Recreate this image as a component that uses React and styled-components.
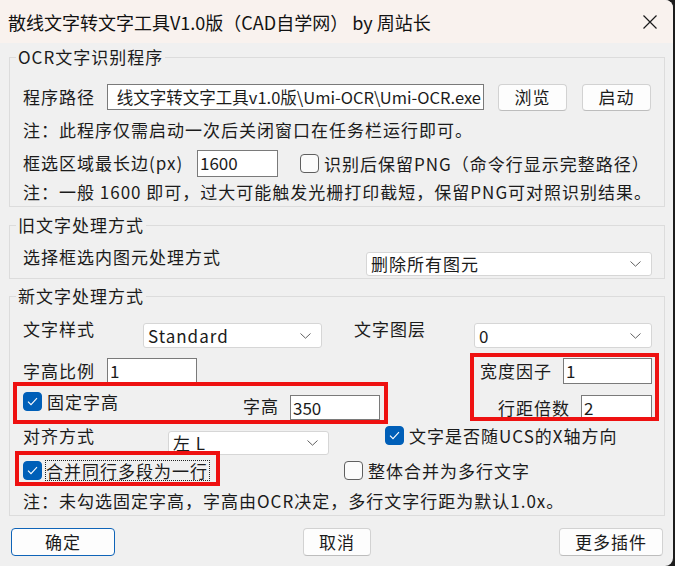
import React from 'react';
import styled, { createGlobalStyle } from 'styled-components';

const Global = createGlobalStyle`
  html, body { margin: 0; padding: 0; background: #1d1d1d; }
  body { font-family: "Noto Sans CJK SC", "Noto Sans", sans-serif; color: #1b1b1b; }
  * { box-sizing: border-box; }
`;

const Window = styled.div`
  width: 673px;
  height: 566px;
  background: #f0f0f0;
  border-radius: 0 8px 8px 0;
  overflow: hidden;
  display: flex;
  flex-direction: column;
`;

const TitleBar = styled.div`
  height: 43px;
  flex: none;
  background: #f9f2ee;
  display: flex;
  align-items: center;
  justify-content: space-between;
  padding: 0 16px 0 8px;
`;

const Title = styled.div`
  font-size: 18px;
  line-height: 24px;
  color: #111;
  white-space: nowrap;
`;

const CloseBtn = styled.div`
  width: 14px;
  height: 14px;
  display: flex;
  svg { display: block; }
`;

const Body = styled.div`
  flex: 1;
  display: flex;
  flex-direction: column;
  padding: 0 8px 0 9px;
`;

const Group = styled.fieldset`
  margin: ${p => p.$mt}px 0 0;
  padding: 0;
  border: 1px solid #dcdcdc;
  min-width: 0;
`;

const Legend = styled.legend`
  margin-left: 6px;
  padding: 0 2px;
  font-size: 17px;
  letter-spacing: 1px;
  line-height: 22px;
  white-space: nowrap;
`;

const GroupBody = styled.div`
  display: flex;
  flex-direction: column;
  padding: ${p => p.$pt}px 12px ${p => p.$pb}px 13px;
`;

const Row = styled.div`
  display: flex;
  align-items: ${p => p.$align || 'center'};
  justify-content: ${p => p.$justify || 'flex-start'};
  height: ${p => (p.$h ? `${p.$h}px` : 'auto')};
  margin-top: ${p => p.$mt || 0}px;
  flex: none;
`;

const Label = styled.span`
  flex: none;
  font-size: 17px;
  letter-spacing: 1px;
  line-height: 22px;
  white-space: nowrap;
  width: ${p => (p.$w ? `${p.$w}px` : 'auto')};
  margin-left: ${p => p.$ml || 0}px;
  margin-top: ${p => p.$mt || 0}px;
`;

const Note = styled.div`
  font-size: 17px;
  letter-spacing: 1px;
  line-height: 22px;
  white-space: nowrap;
  height: ${p => p.$h}px;
  display: flex;
  align-items: center;
  margin-top: ${p => p.$mt || 0}px;
`;

const TextBox = styled.div`
  flex: none;
  width: ${p => p.$w}px;
  height: ${p => p.$h || 25}px;
  margin-left: ${p => p.$ml || 0}px;
  margin-top: ${p => p.$mt || 0}px;
  background: #fff;
  border: 1px solid #7a7a7a;
  font-size: ${p => (p.$end ? 16.5 : 17)}px;
  line-height: 22px;
  padding: 0 2px;
  display: flex;
  align-items: center;
  justify-content: ${p => (p.$end ? 'flex-end' : 'flex-start')};
  overflow: hidden;
  white-space: nowrap;
`;

const Button = styled.button`
  flex: none;
  width: ${p => p.$w}px;
  height: ${p => p.$h || 27}px;
  margin-left: ${p => p.$ml || 0}px;
  background: #fdfdfd;
  border: 1px solid ${p => (p.$primary ? '#0f64b8' : '#d2d2d2')};
  border-bottom-color: ${p => (p.$primary ? '#0f64b8' : '#bdbdbd')};
  border-radius: 4px;
  font-family: inherit;
  font-size: 17px;
  letter-spacing: 1px;
  line-height: 22px;
  color: #1b1b1b;
  padding: 0;
  display: flex;
  align-items: center;
  justify-content: center;
`;

const Select = styled.div`
  flex: none;
  width: ${p => p.$w}px;
  height: ${p => p.$h || 25}px;
  margin-left: ${p => p.$ml || 0}px;
  margin-top: ${p => p.$mt || 0}px;
  background: #fff;
  border: 1px solid #d6d6d6;
  border-radius: 3px;
  display: flex;
  align-items: center;
  justify-content: space-between;
  padding: 0 10px 0 4px;
  font-size: 17px;
  letter-spacing: 1px;
  line-height: 22px;
  white-space: nowrap;
`;

const CheckItem = styled.label`
  flex: none;
  display: flex;
  align-items: center;
  gap: ${p => (p.$focus ? 3 : 4)}px;
  margin-left: ${p => p.$ml || 0}px;
  margin-top: ${p => p.$mt || 0}px;
  font-size: 17px;
  letter-spacing: 1px;
  line-height: 22px;
  white-space: nowrap;
`;

const Box = styled.span`
  flex: none;
  width: 19px;
  height: 19px;
  border-radius: 4px;
  background: ${p => (p.$on ? '#005fb8' : '#fbfbfb')};
  border: 1px solid ${p => (p.$on ? '#005fb8' : '#5f5f5f')};
  display: flex;
  align-items: center;
  justify-content: center;
`;

const CheckText = styled.span`
  border: 1px ${p => (p.$focus ? 'dotted #222' : 'solid transparent')};
  padding: 0 1px 0 0;
  line-height: 19px;
`;

const Highlight = styled.div`
  position: relative;
  flex: none;
  margin-top: ${p => p.$mt || 0}px;
  &::after {
    content: '';
    position: absolute;
    top: ${p => -p.$t}px;
    right: ${p => -p.$r}px;
    bottom: ${p => -p.$b}px;
    left: ${p => -p.$l}px;
    border: 4px solid #ee1111;
    pointer-events: none;
  }
`;

const Column = styled.div`
  display: flex;
  flex-direction: column;
  align-items: ${p => p.$items || 'flex-start'};
  margin-top: ${p => p.$mt || 0}px;
`;

const Split = styled.div`
  display: flex;
  justify-content: space-between;
  align-items: flex-start;
`;

const ButtonBar = styled.div`
  display: flex;
  justify-content: space-between;
  padding: 0 2px;
  margin-top: 12px;
`;

const Chevron = () => (
  <svg width="11" height="6" viewBox="0 0 11 6">
    <path d="M0.5 0.5 L5.5 5.2 L10.5 0.5" fill="none" stroke="#606060" strokeWidth="1" />
  </svg>
);

const Check = ({ on, children, focus, ml, mt }) => (
  <CheckItem $ml={ml} $mt={mt} $focus={focus}>
    <Box $on={on}>
      {on && (
        <svg width="11" height="9" viewBox="0 0 11 9">
          <path d="M1 4.6 L4 7.6 L10 1.2" fill="none" stroke="#fff" strokeWidth="1.1" />
        </svg>
      )}
    </Box>
    <CheckText $focus={focus}>{children}</CheckText>
  </CheckItem>
);

export default function App() {
  return (
    <>
      <Global />
      <Window>
        <TitleBar>
          <Title>散线文字转文字工具V1.0版（CAD自学网） by 周站长</Title>
          <CloseBtn>
            <svg width="14" height="14" viewBox="0 0 14 14">
              <path d="M0.5 0.5 L13.5 13.5 M13.5 0.5 L0.5 13.5" stroke="#1a1a1a" strokeWidth="1.2" />
            </svg>
          </CloseBtn>
        </TitleBar>
        <Body>
          <Group $mt={3}>
            <Legend>OCR文字识别程序</Legend>
            <GroupBody $pt={14} $pb={0}>
              <Row $h={30}>
                <Label $w={84}>程序路径</Label>
                <TextBox $w={377} $h={26} $end>线文字转文字工具v1.0版\Umi-OCR\Umi-OCR.exe</TextBox>
                <Button $w={69} $ml={14}>浏览</Button>
                <Button $w={69} $ml={15}>启动</Button>
              </Row>
              <Note $h={36}>注：此程序仅需启动一次后关闭窗口在任务栏运行即可。</Note>
              <Row $h={30}>
                <Label $w={174}>框选区域最长边(px)</Label>
                <TextBox $w={81} $h={27}>1600</TextBox>
                <Check ml={22}>识别后保留PNG（命令行显示完整路径）</Check>
              </Row>
              <Note $h={28}>注：一般 1600 即可，过大可能触发光栅打印截短，保留PNG可对照识别结果。</Note>
            </GroupBody>
          </Group>

          <Group $mt={7}>
            <Legend>旧文字处理方式</Legend>
            <GroupBody $pt={0} $pb={2}>
              <Row $align="flex-start" $justify="space-between">
                <Label $mt={10}>选择框选内图元处理方式</Label>
                <Select $w={286} $h={24} $mt={16}>
                  <span>删除所有图元</span>
                  <Chevron />
                </Select>
              </Row>
            </GroupBody>
          </Group>

          <Group $mt={6}>
            <Legend>新文字处理方式</Legend>
            <GroupBody $pt={11} $pb={3}>
              <Row $h={30} $align="flex-start">
                <Label $w={120}>文字样式</Label>
                <Select $w={179} $mt={5}>
                  <span>Standard</span>
                  <Chevron />
                </Select>
                <Label $w={120} $ml={32}>文字图层</Label>
                <Select $w={178} $mt={5}>
                  <span>0</span>
                  <Chevron />
                </Select>
              </Row>

              <Split>
                <Column $mt={10}>
                  <Row $h={25}>
                    <Label $w={84}>字高比例</Label>
                    <TextBox $w={90}>1</TextBox>
                  </Row>
                  <Highlight $mt={8} $t={9} $r={8} $b={4} $l={10}>
                    <Row $h={29} $align="flex-start">
                      <Check on>固定字高</Check>
                      <Label $ml={122} $mt={4}>字高</Label>
                      <TextBox $w={90} $ml={11} $mt={4}>350</TextBox>
                    </Row>
                  </Highlight>
                </Column>
                <Highlight $mt={10} $t={5} $r={7} $b={1} $l={10}>
                  <Column $items="flex-end">
                    <Row $h={26}>
                      <Label>宽度因子</Label>
                      <TextBox $w={89} $h={26} $ml={11}>1</TextBox>
                    </Row>
                    <Row $h={25} $mt={11}>
                      <Label>行距倍数</Label>
                      <TextBox $w={71} $ml={11}>2</TextBox>
                    </Row>
                  </Column>
                </Highlight>
              </Split>

              <Row $h={30} $mt={5} $align="flex-start">
                <Label $w={145}>对齐方式</Label>
                <Select $w={161} $h={24} $mt={6}>
                  <span>左 L</span>
                  <Chevron />
                </Select>
                <Check on ml={56}>文字是否随UCS的X轴方向</Check>
              </Row>

              <Row $h={22} $mt={4}>
                <Highlight $t={9} $r={10} $b={5} $l={8}>
                  <Check on focus>合并同行多段为一行</Check>
                </Highlight>
                <Check ml={134}>整体合并为多行文字</Check>
              </Row>

              <Note $h={22} $mt={9}>注：未勾选固定字高，字高由OCR决定，多行文字行距为默认1.0x。</Note>
            </GroupBody>
          </Group>

          <ButtonBar>
            <Button $w={104} $h={28} $primary>确定</Button>
            <Button $w={68} $h={28}>取消</Button>
            <Button $w={104} $h={28}>更多插件</Button>
          </ButtonBar>
        </Body>
      </Window>
    </>
  );
}
